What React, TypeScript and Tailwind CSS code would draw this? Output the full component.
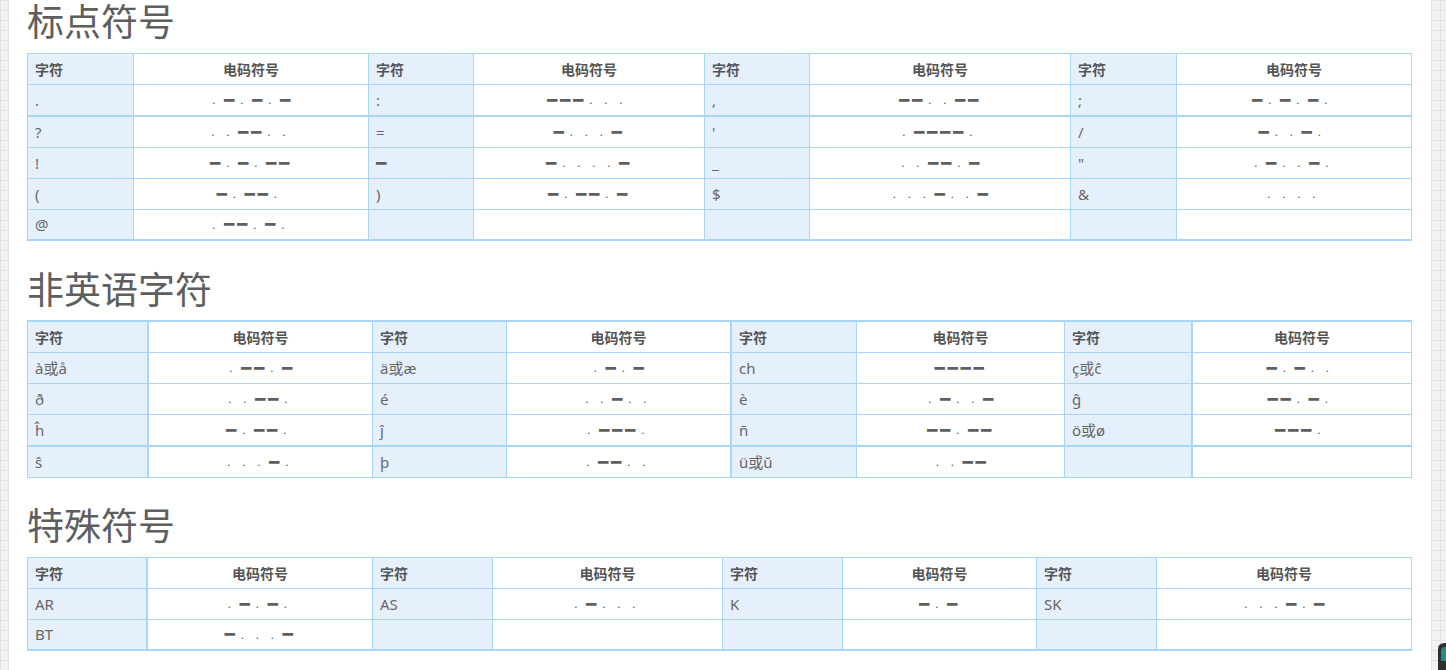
import React from "react";

type Pair = [string, string];

interface TableSpec {
  title: string;
  cols: string;
  rows: Pair[][];
  // extra classes for each row (thicker lines where the original has them)
  rowClass: string[];
  // extra classes per column
  colClass: string[];
  wrapClass: string;
}

const tables: TableSpec[] = [
  {
    title: "标点符号",
    cols: "grid-cols-[106px_235px_105px_231px_105px_261px_106px_235px]",
    wrapClass: "border-t",
    rowClass: ["h-[31px]", "h-[32px] border-b-2", "h-[31px]", "h-[31px]", "h-[31px]", "h-[31px] border-b-2"],
    colClass: ["", "", "", "", "", "", "", ""],
    rows: [
      [[".", ".-.-.-"], [":", "---..."], [",", "--..--"], [";", "-.-.-."]],
      [["?", "..--.."], ["=", "-...-"], ["'", ".----."], ["/", "-..-."]],
      [["!", "-.-.--"], ["━", "-....-"], ["_", "..--.-"], ['"', ".-..-."]],
      [["(", "-.--."], [")", "-.--.-"], ["$", "...-..-"], ["&", "...."]],
      [["@", ".--.-."], ["", ""], ["", ""], ["", ""]],
    ],
  },
  {
    title: "非英语字符",
    cols: "grid-cols-[121px_224px_134px_225px_125px_208px_128px_219px]",
    wrapClass: "border-t-2",
    rowClass: ["h-[31px]", "h-[31px]", "h-[31px]", "h-[32px] border-b-2", "h-[31px]"],
    colClass: ["border-r-2", "", "", "border-r-2", "", "", "border-r-2", ""],
    rows: [
      [["à或å", ".--.-"], ["ä或æ", ".-.-"], ["ch", "----"], ["ç或ĉ", "-.-.."]],
      [["ð", "..--."], ["é", "..-.."], ["è", ".-..-"], ["ĝ", "--.-."]],
      [["ĥ", "-.--."], ["ĵ", ".---."], ["ñ", "--.--"], ["ö或ø", "---."]],
      [["ŝ", "...-."], ["þ", ".--.."], ["ü或ŭ", "..--"], ["", ""]],
    ],
  },
  {
    title: "特殊符号",
    cols: "grid-cols-[120px_225px_120px_230px_120px_194px_120px_255px]",
    wrapClass: "border-t",
    rowClass: ["h-[31px]", "h-[31px]", "h-[31px] border-b-2"],
    colClass: ["border-r-2", "", "", "", "", "", "", ""],
    rows: [
      [["AR", ".-.-."], ["AS", ".-..."], ["K", "-.-"], ["SK", "...-.-"]],
      [["BT", "-...-"], ["", ""], ["", ""], ["", ""]],
    ],
  },
];

const headingSpacing = ["mt-0 mb-[13px]", "mt-[27px] mb-[12px]", "mt-[26px] mb-[13px]"];

function Dash() {
  return (
    <span className="inline-flex h-[17px] w-[13px] items-center text-[17px] leading-none text-[#5f5f5f] [font-family:'DejaVu_Sans',sans-serif]">
      ━
    </span>
  );
}

function Dot() {
  return (
    <span className="inline-flex h-[12px] w-[15px] items-end pl-[3px] text-[13px] leading-none text-[#5a5a5a] [font-family:'Liberation_Sans',sans-serif]">
      .
    </span>
  );
}

function Morse({ code }: { code: string }) {
  return (
    <span className="inline-flex items-center">
      {code.split("").map((c, i) => (c === "." ? <Dot key={i} /> : <Dash key={i} />))}
    </span>
  );
}

function CodeTable({ spec }: { spec: TableSpec }) {
  const header: Pair[] = [
    ["字符", "电码符号"],
    ["字符", "电码符号"],
    ["字符", "电码符号"],
    ["字符", "电码符号"],
  ];
  const all = [header, ...spec.rows];
  return (
    <div className={`grid ${spec.cols} border-l border-[#a8d6f8] ${spec.wrapClass}`}>
      {all.map((row, r) =>
        row.map((pair, p) => {
          const base = `border-b border-[#a8d6f8] ${spec.rowClass[r]}`;
          const charCls = `${base} border-r ${spec.colClass[p * 2]} bg-[#e6f0fd] flex items-center pl-[7px]`;
          const codeCls = `${base} border-r ${spec.colClass[p * 2 + 1]} bg-white flex items-center justify-center`;
          if (r === 0) {
            return (
              <React.Fragment key={`${r}-${p}`}>
                <div className={`${charCls} text-[14px] font-bold text-[#555]`}>{pair[0]}</div>
                <div className={`${codeCls} text-[14px] font-bold text-[#555]`}>{pair[1]}</div>
              </React.Fragment>
            );
          }
          return (
            <React.Fragment key={`${r}-${p}`}>
              <div className={`${charCls} text-[15px] text-[#666]`}>
                {pair[0] === "━" ? <Dash /> : pair[0]}
              </div>
              <div className={codeCls}>{pair[1] && <Morse code={pair[1]} />}</div>
            </React.Fragment>
          );
        })
      )}
    </div>
  );
}

export default function App() {
  return (
    <div className="relative flex h-[670px] w-full overflow-hidden bg-[#f2f2f2] bg-[linear-gradient(#e3e3e3_1px,transparent_1px),linear-gradient(90deg,#e3e3e3_1px,transparent_1px)] bg-[size:12px_10px] [font-family:'Noto_Sans','Noto_Sans_CJK_SC',sans-serif]">
      <div className="w-[8px] shrink-0" />
      <main className="flex-1 border-x border-[#e2e2e2] bg-white pl-[18px] pr-[19px]">
        {tables.map((t, i) => (
          <section key={t.title}>
            <h2
              className={`${headingSpacing[i]} text-[37px] leading-[40px] text-[#5e5e5e] [font-family:'Noto_Sans_CJK_SC',sans-serif]`}
            >
              {t.title}
            </h2>
            <CodeTable spec={t} />
          </section>
        ))}
      </main>
      <div className="w-[14px] shrink-0" />
      <svg className="absolute left-[1436px] top-[641px]" width="14" height="30" viewBox="0 0 14 30">
        <path d="M2 8 Q2 2 9 2 L14 2 L14 30 L2 30 Z" fill="#2f2f2f" />
        <path d="M5 10 Q5 6 9 6 L12 6 L12 20 L5 20 Z" fill="#1f8f86" />
      </svg>
    </div>
  );
}
